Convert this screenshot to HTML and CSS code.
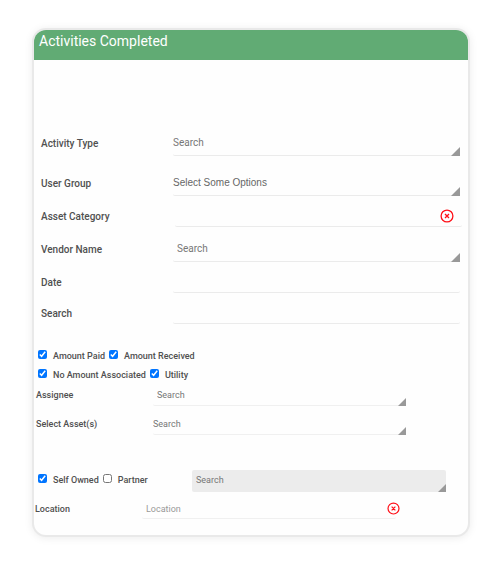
FILE: index.html
```html
<!DOCTYPE html>
<html lang="en">
<head>
<meta charset="utf-8">
<meta name="viewport" content="width=device-width, initial-scale=1">
<title>Activities Completed</title>
<link rel="stylesheet" href="styles.css">
</head>
<body>
<form class="card">
  <h1 class="title">Activities Completed</h1>

  <div class="filters">
    <div class="row">
      <label for="activity">Activity Type</label>
      <span class="field corner"><input id="activity" type="text" placeholder="Search"></span>
    </div>
    <div class="row row-spaced">
      <label for="group">User Group</label>
      <span class="field corner"><select id="group"><option>Select Some Options</option></select></span>
    </div>
    <div class="row row-short">
      <label for="category">Asset Category</label>
      <span class="field field-shifted">
        <input id="category" type="text">
        <button class="clear" type="button" aria-label="Clear asset category">
          <svg viewBox="0 0 14 14"><circle cx="7" cy="7" r="5.9"/><path d="M5 5l4 4M9 5l-4 4"/></svg>
        </button>
      </span>
    </div>
    <div class="row">
      <label for="vendor">Vendor Name</label>
      <span class="field corner indented"><input id="vendor" type="text" placeholder="Search"></span>
    </div>
    <div class="row row-short">
      <label for="date">Date</label>
      <span class="field"><input id="date" type="text"></span>
    </div>
    <div class="row row-short">
      <label for="search">Search</label>
      <span class="field"><input id="search" type="text"></span>
    </div>
  </div>

  <div class="options">
    <div class="checks">
      <label><input type="checkbox" checked>Amount Paid</label>
      <label><input type="checkbox" checked>Amount Received</label>
    </div>
    <div class="checks">
      <label><input type="checkbox" checked>No Amount Associated</label>
      <label><input type="checkbox" checked>Utility</label>
    </div>
  </div>

  <div class="assign">
    <div class="row">
      <label for="assignee">Assignee</label>
      <span class="field corner indented"><input id="assignee" type="text" placeholder="Search"></span>
    </div>
    <div class="row">
      <label for="assets">Select Asset(s)</label>
      <span class="field corner"><input id="assets" type="text" placeholder="Search"></span>
    </div>
  </div>

  <div class="owner">
    <div class="checks">
      <label><input type="checkbox" checked>Self Owned</label>
      <label><input type="checkbox">Partner</label>
    </div>
    <span class="field corner filled"><input type="text" placeholder="Search" aria-label="Search partner" disabled></span>
  </div>

  <div class="location">
    <label for="location">Location</label>
    <span class="field indented">
      <input id="location" type="text" placeholder="Location">
      <button class="clear" type="button" aria-label="Clear location">
        <svg viewBox="0 0 14 14"><circle cx="7" cy="7" r="5.9"/><path d="M5 5l4 4M9 5l-4 4"/></svg>
      </button>
    </span>
  </div>
</form>
</body>
</html>
```
FILE: styles.css
```css
* {
  box-sizing: border-box;
}

body {
  margin: 0;
  padding: 30px 32px 30px 34px;
  background: #fff;
  color: #505050;
  font: 500 10px/14px Roboto, "Liberation Sans", sans-serif;
}

.card {
  padding-bottom: 16px;
  border-radius: 12px;
  background: #fefefe;
  box-shadow: 0 0 0 2px #e9e9e9, 0 1px 8px 2px #ececec;
  overflow: hidden;
}

.title {
  height: 30px;
  margin: 0;
  padding: 0 5px;
  background: #61ab74;
  color: #fff;
  font-size: 14px;
  font-weight: 400;
  line-height: 22px;
}

.filters {
  display: flex;
  flex-direction: column;
  gap: 9px;
  padding: 70px 8px 0 7px;
}

.row {
  display: grid;
  grid-template-columns: 132px 1fr;
  align-items: center;
  height: 26px;
}

.filters label {
  padding-top: 2px;
}

.row-short {
  height: 22px;
}

.row-spaced {
  margin-top: 5px;
}

.field {
  position: relative;
  display: flex;
  align-items: center;
  align-self: stretch;
  border-bottom: 1px solid #ebebeb;
  border-radius: 2px;
}

.field-shifted {
  margin: 0 -2px 0 2px;
}

.indented {
  padding-left: 4px;
}

.field input,
.field select {
  flex: 1;
  min-width: 0;
  height: 100%;
  margin: 0;
  padding: 0;
  border: 0;
  outline: 0;
  background: none;
  color: #666;
  font: 400 10px/14px Roboto, "Liberation Sans", sans-serif;
}

.field select {
  appearance: none;
  font-family: "Liberation Sans", sans-serif;
}

.field input::placeholder {
  color: #777;
}

.corner::after {
  content: "";
  position: absolute;
  right: 0;
  bottom: -1px;
  width: 9px;
  height: 9px;
  background: #999;
  clip-path: polygon(100% 0, 100% 100%, 0 100%);
  pointer-events: none;
}

.clear {
  display: flex;
  width: 14px;
  height: 14px;
  margin-right: 8px;
  padding: 0;
  border: 0;
  background: none;
}

.clear svg {
  width: 100%;
  fill: none;
  stroke: #ff1018;
  stroke-width: 1.3;
}

.options {
  padding: 22px 4px 0;
}

.checks {
  display: flex;
  gap: 4px;
  height: 19px;
  font-size: 9px;
}

.checks label {
  display: flex;
  align-items: center;
  gap: 6px;
}

.checks input {
  width: 9px;
  height: 9px;
  margin: 0 0 2px;
  accent-color: #0075ff;
}

.assign,
.location {
  font-size: 9px;
}

.assign {
  display: flex;
  flex-direction: column;
  gap: 7px;
  padding: 0 62px 0 2px;
}

.assign .row {
  grid-template-columns: 117px 1fr;
  height: 22px;
}

.assign .field input,
.owner .field input,
.location .field input {
  font-size: 9px;
}

.assign .field,
.location .field {
  border-color: #f0f0f0;
}

.assign .corner::after,
.filled::after {
  width: 8px;
  height: 8px;
}

.owner {
  display: grid;
  grid-template-columns: 154px 1fr;
  padding: 35px 22px 0 4px;
}

.filled {
  height: 22px;
  padding: 0 4px 3px;
  border: 0;
  background: #ececec;
}

.filled::after {
  bottom: 0;
}

.location {
  display: grid;
  grid-template-columns: 107px 1fr;
  align-items: center;
  height: 20px;
  margin: 7px 72px 0 1px;
}

.location .clear {
  width: 13px;
  height: 13px;
  margin-right: -4px;
}

.location .field input::placeholder {
  color: #999;
}
```
